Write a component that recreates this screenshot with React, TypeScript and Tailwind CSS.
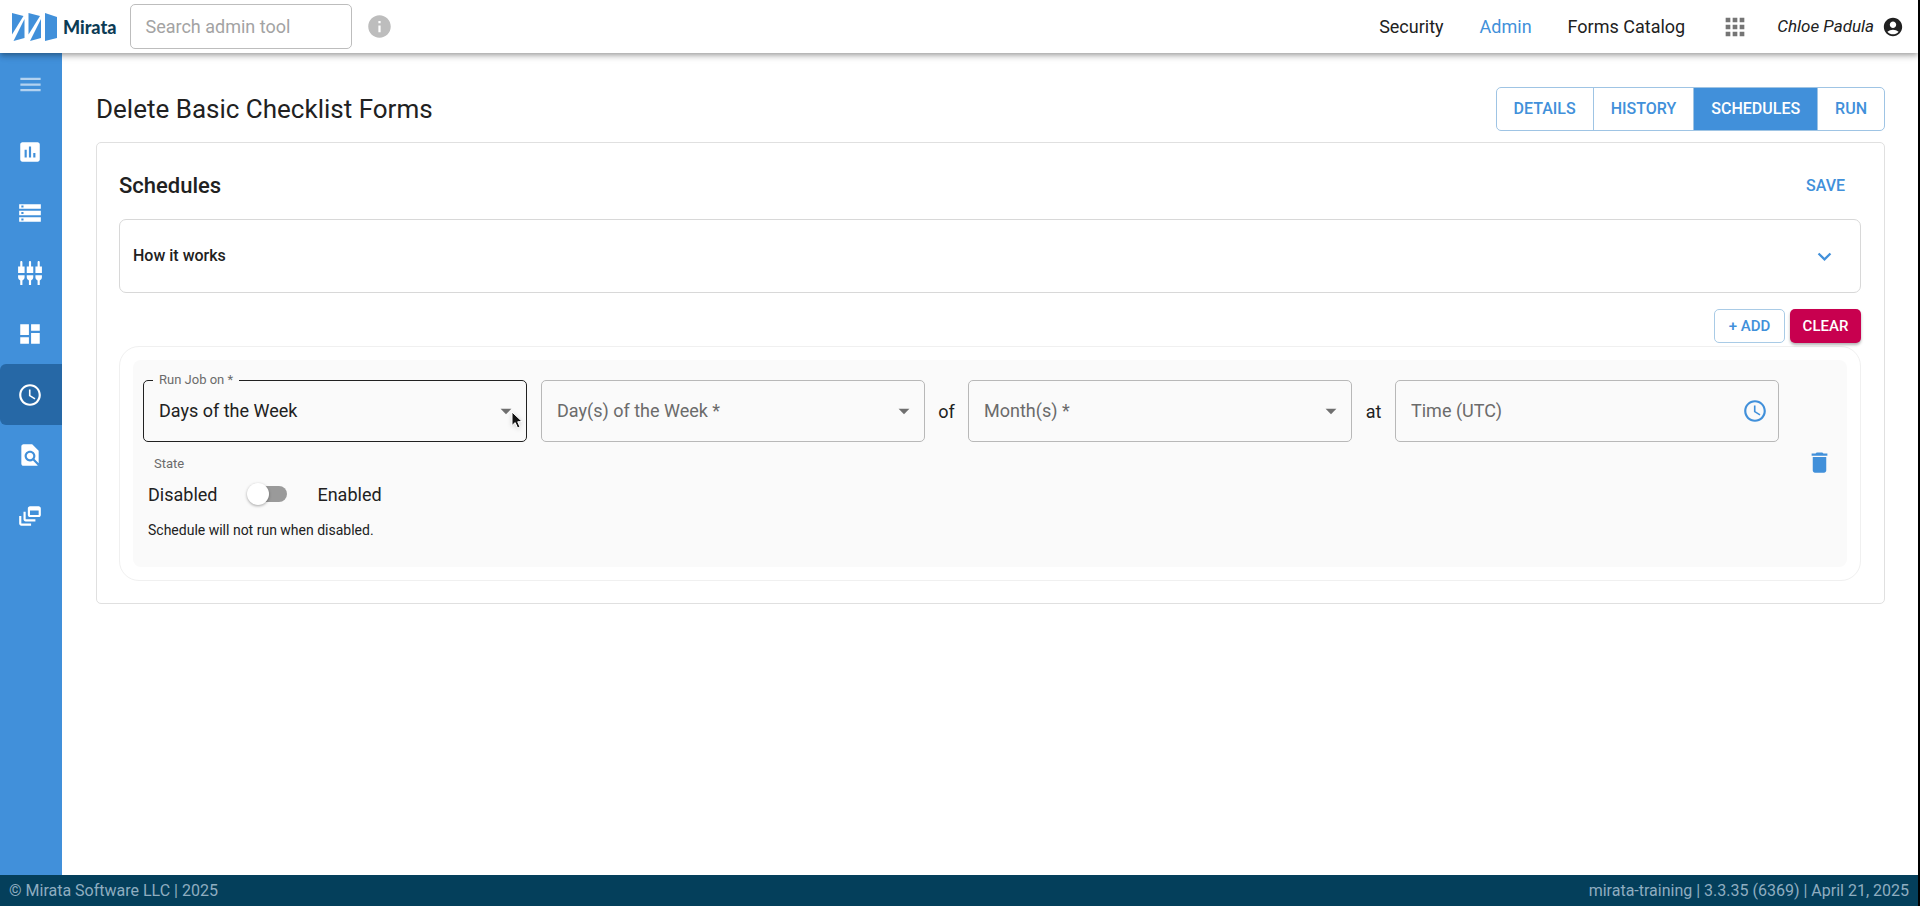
import React, { useState } from 'react';
import {
  MdAccessTime,
  MdAccountCircle,
  MdApps,
  MdArrowDropDown,
  MdAssessment,
  MdDashboard,
  MdDelete,
  MdDynamicFeed,
  MdExpandMore,
  MdFindInPage,
  MdInfo,
  MdMenu,
  MdSettingsInputComponent,
  MdStorage,
} from 'react-icons/md';

const sideItems = [
  { label: 'Reports', Icon: MdAssessment },
  { label: 'Data', Icon: MdStorage },
  { label: 'Integrations', Icon: MdSettingsInputComponent },
  { label: 'Dashboard', Icon: MdDashboard },
  { label: 'Jobs', Icon: MdAccessTime, active: true },
  { label: 'Audit', Icon: MdFindInPage },
  { label: 'Batches', Icon: MdDynamicFeed },
];

const tabs = ['Details', 'History', 'Schedules', 'Run'];

const Logo: React.FC = () => (
  <a href="#" className="flex items-center gap-[6px]">
    <svg width="45" height="28" viewBox="0 0 45 28" fill="#4190da" aria-hidden="true">
      <path d="M0 0 L11.5 3 L0 21.5 Z" />
      <path d="M12.5 6 L12.5 25 L1.5 28 Z" />
      <path d="M16.5 0 L28 3 L16.5 21.5 Z" />
      <path d="M29 6 L29 25 L18 28 Z" />
      <path d="M33 0 L45 4 L45 25 L33 28 Z" />
    </svg>
    <span className="font-[Lato,sans-serif] text-[18px] leading-6 font-black text-[#0c3c55]">
      Mirata
    </span>
  </a>
);

const Header: React.FC = () => (
  <header className="relative z-10 flex h-[53px] shrink-0 items-center bg-white pr-[14px] pl-3 shadow-[0_2px_4px_-1px_rgba(0,0,0,0.2),0_4px_5px_0_rgba(0,0,0,0.14),0_1px_10px_0_rgba(0,0,0,0.12)]">
    <Logo />
    <input
      type="text"
      aria-label="Search admin tool"
      placeholder="Search admin tool"
      className="ml-[14px] h-[45px] w-[222px] rounded-[5px] border border-[#bdbdbd] px-[14px] text-[18px] text-[#212121] outline-none placeholder:text-[#a3a3a3]"
    />
    <button type="button" aria-label="Search help" className="ml-[14px] text-[#bdbdbd]">
      <MdInfo size={27} />
    </button>
    <nav className="ml-auto flex items-center gap-9 text-[18px]">
      <a href="#">Security</a>
      <a href="#" className="text-[#4190da]">
        Admin
      </a>
      <a href="#">Forms Catalog</a>
    </nav>
    <button type="button" aria-label="Apps" className="ml-9 text-[#757575]">
      <MdApps size={28} />
    </button>
    <button type="button" className="ml-7 flex items-center gap-2 text-[17px] italic">
      Chloe Padula
      <MdAccountCircle size={22} />
    </button>
  </header>
);

const Sidebar: React.FC = () => (
  <aside className="w-[62px] shrink-0 bg-[#4190da] text-white">
    <button
      type="button"
      aria-label="Toggle menu"
      className="flex h-[69px] w-full items-center justify-center pt-[6px] pr-px pb-[13px] text-white/60"
    >
      <MdMenu size={27} />
    </button>
    <nav className="grid h-[424px] auto-rows-fr">
      {sideItems.map(({ label, Icon, active }) => (
        <a
          key={label}
          href="#"
          aria-label={label}
          className={`flex items-center justify-center rounded-l-[6px] pr-[2px] ${active ? 'bg-[#2668a6]' : ''}`}
        >
          <Icon size={26} />
        </a>
      ))}
    </nav>
  </aside>
);

interface SelectFieldProps {
  id: string;
  label: string;
  options: string[];
  initial?: string;
}

const SelectField: React.FC<SelectFieldProps> = ({ id, label, options, initial = '' }) => {
  const [value, setValue] = useState(initial);
  const filled = value !== '';

  return (
    <div className="relative flex-1">
      {filled && (
        <label
          htmlFor={id}
          className="absolute -top-2 left-[10px] bg-[#fafafa] px-[6px] text-[13px] leading-4 text-[#6b6b6b]"
        >
          {label}
        </label>
      )}
      <select
        id={id}
        aria-label={label}
        value={value}
        onChange={(e) => setValue(e.target.value)}
        className={`h-[62px] w-full appearance-none rounded-[5px] border bg-transparent px-[15px] pb-[2px] text-[18px] outline-none ${
          filled ? 'border-[#212121] text-[#212121]' : 'border-[#b8b8b8] text-[#6b6b6b]'
        }`}
      >
        {!filled && <option value="">{label}</option>}
        {options.map((option) => (
          <option key={option}>{option}</option>
        ))}
      </select>
      <MdArrowDropDown
        size={26}
        className="pointer-events-none absolute top-[18px] right-2 text-[#6f6f6f]"
      />
    </div>
  );
};

const ScheduleRow: React.FC = () => {
  const [enabled, setEnabled] = useState(false);

  return (
    <div className="flex items-center rounded-[8px] bg-[#fafafa] pt-5 pr-[14px] pb-[25px] pl-[10px]">
      <div className="flex-1">
        <div className="flex items-center text-[18px]">
          <div className="relative flex flex-1">
            <SelectField
              id="run-on"
              label="Run Job on *"
              initial="Days of the Week"
              options={['Days of the Week', 'Days of the Month']}
            />
            {/* Mouse pointer */}
            <svg
              width="14"
              height="20"
              viewBox="0 0 14 20"
              className="pointer-events-none absolute top-[31px] right-[2px] drop-shadow-sm"
            >
              <path
                d="M1 1 L1 14.5 L4.2 11.6 L6.6 17 L9 16 L6.7 10.8 L11 10.5 Z"
                fill="#111"
                stroke="#fff"
                strokeWidth="1"
              />
            </svg>
          </div>
          <div className="ml-[14px] flex flex-1">
            <SelectField
              id="weekdays"
              label="Day(s) of the Week *"
              options={['Monday', 'Tuesday', 'Wednesday', 'Thursday', 'Friday', 'Saturday', 'Sunday']}
            />
          </div>
          <span className="w-[43px] text-center">of</span>
          <div className="flex flex-1">
            <SelectField id="months" label="Month(s) *" options={['January', 'February', 'March']} />
          </div>
          <span className="w-[43px] text-center">at</span>
          <div className="relative flex-1">
            <input
              type="text"
              aria-label="Time (UTC)"
              placeholder="Time (UTC)"
              className="h-[62px] w-full rounded-[5px] border border-[#b8b8b8] bg-transparent px-[15px] pb-[2px] text-[18px] outline-none placeholder:text-[#6b6b6b]"
            />
            <button
              type="button"
              aria-label="Pick a time"
              className="absolute top-[18px] right-[11px] text-[#4190da]"
            >
              <MdAccessTime size={26} />
            </button>
          </div>
        </div>

        <div className="mt-3 pl-[5px]">
          <p className="pl-[6px] text-[13px] leading-5 text-[#6b6b6b]">State</p>
          <label className="mt-2 flex h-6 items-center text-[18px]">
            Disabled
            <input
              type="checkbox"
              role="switch"
              aria-label="Enable schedule"
              checked={enabled}
              onChange={(e) => setEnabled(e.target.checked)}
              className="relative mr-[30px] ml-8 h-4 w-[38px] appearance-none rounded-full bg-[#9a9a9a] before:absolute before:-top-[3px] before:-left-[2px] before:size-[22px] before:rounded-full before:bg-white before:shadow-[0_1px_3px_rgba(0,0,0,0.35)] checked:bg-[#a0c8ed] checked:before:left-[18px] checked:before:bg-[#4190da]"
            />
            Enabled
          </label>
          <p className="mt-3 text-[14px] leading-6">Schedule will not run when disabled.</p>
        </div>
      </div>
      <button type="button" aria-label="Delete schedule" className="ml-[27px] pt-[3px] text-[#4190da]">
        <MdDelete size={27} />
      </button>
    </div>
  );
};

const Footer: React.FC = () => (
  <footer className="flex h-[31px] shrink-0 items-center justify-between bg-[#043f5b] px-[9px] text-[16px] text-[#8fadc0]">
    <span>© Mirata Software LLC | 2025</span>
    <span>mirata-training | 3.3.35 (6369) | April 21, 2025</span>
  </footer>
);

export default function App() {
  const [tab, setTab] = useState('Schedules');

  return (
    <div className="flex min-h-screen flex-col border-r-2 border-black bg-white font-[Roboto,sans-serif] text-[#212121]">
      <Header />
      <div className="flex flex-1">
        <Sidebar />
        <main className="flex-1 pt-[34px] pr-[33px] pl-[34px]">
          <div className="flex items-center justify-between">
            <h1 className="text-[26px] leading-8">Delete Basic Checklist Forms</h1>
            <div className="flex h-11 divide-x divide-[#9fc4e4] overflow-hidden rounded-[5px] border border-[#9fc4e4]">
              {tabs.map((name) => (
                <button
                  key={name}
                  type="button"
                  onClick={() => setTab(name)}
                  className={`px-[17px] text-[16px] font-medium uppercase ${
                    tab === name ? 'bg-[#4190da] text-white' : 'text-[#4190da]'
                  }`}
                >
                  {name}
                </button>
              ))}
            </div>
          </div>

          <section className="mt-[11px] rounded-[5px] border border-[#e0e0e0] pt-[22px] pr-[23px] pb-[22px] pl-[22px]">
            <div className="flex h-[42px] items-center justify-between pr-4">
              <h2 className="pb-[2px] text-[22px] font-medium">Schedules</h2>
              <button type="button" className="text-[16px] font-medium text-[#4190da] uppercase">
                Save
              </button>
            </div>

            <button
              type="button"
              aria-expanded="false"
              className="mt-3 flex h-[74px] w-full items-center justify-between rounded-[7px] border border-[#d8d8d8] pr-[22px] pl-[13px] text-[16px] font-medium"
            >
              How it works
              <MdExpandMore size={27} className="text-[#4190da]" />
            </button>

            <div className="mt-4 flex justify-end gap-[5px] text-[15px] font-medium">
              <button
                type="button"
                className="h-[34px] w-[71px] rounded-[5px] border border-[#a9cbe6] text-[#4190da]"
              >
                + ADD
              </button>
              <button
                type="button"
                className="h-[34px] w-[71px] rounded-[5px] bg-[#c8004f] text-white shadow-[0_2px_3px_rgba(0,0,0,0.3)]"
              >
                CLEAR
              </button>
            </div>

            <div className="mt-[3px] rounded-[20px] border border-[#f0f0f0] p-[13px]">
              <ScheduleRow />
            </div>
          </section>
        </main>
      </div>
      <Footer />
    </div>
  );
}
